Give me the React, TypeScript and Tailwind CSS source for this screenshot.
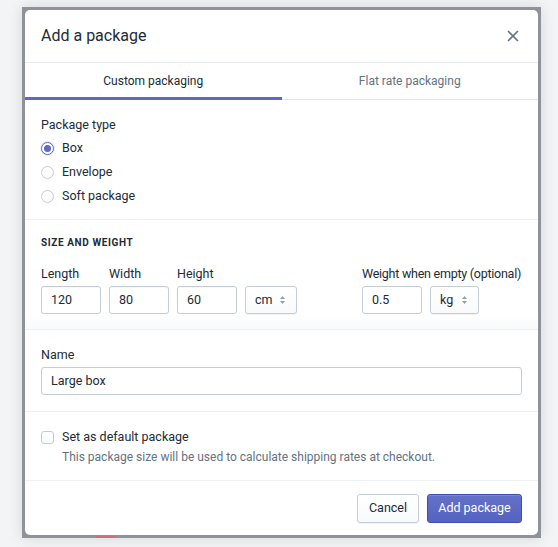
import React from "react";

function Arrows() {
  return (
    <svg width="7" height="10" viewBox="0 0 7 10" className="shrink-0">
      <path d="M3.5 1 L6 4 L1 4 Z" fill="#919eab" />
      <path d="M3.5 9 L6 6 L1 6 Z" fill="#919eab" />
    </svg>
  );
}

function Field({ label, value }: { label: string; value: string }) {
  return (
    <div className="flex flex-col">
      <div className="h-5 leading-5 text-[12.5px] text-[#212b36] mb-[2px]">{label}</div>
      <div className="w-[60px] h-[28px] border border-[#c4cdd5] rounded-[3px] bg-white flex items-center pl-[9px] text-[12.5px] text-[#212b36] shadow-[inset_0_1px_0_rgba(99,115,129,0.05)]">
        {value}
      </div>
    </div>
  );
}

function Select({ value, w }: { value: string; w: string }) {
  return (
    <div
      className={`${w} h-[28px] border border-[#c4cdd5] rounded-[3px] bg-gradient-to-b from-white to-[#f9fafb] flex items-center pl-[9px] pr-[10px] justify-between text-[12.5px] text-[#212b36] shadow-[0_1px_0_rgba(22,29,37,0.05)]`}
    >
      <span>{value}</span>
      <Arrows />
    </div>
  );
}

function Radio({ label, checked }: { label: string; checked?: boolean }) {
  return (
    <div className="h-6 flex items-center">
      <div
        className={
          checked
            ? "w-[13px] h-[13px] rounded-full border border-[#5c6ac4] bg-white flex items-center justify-center shadow-[0_0_0_1px_rgba(92,106,196,0.15)]"
            : "w-[13px] h-[13px] rounded-full border border-[#c4cdd5] bg-gradient-to-b from-white to-[#f9fafb]"
        }
      >
        {checked && <div className="w-[7px] h-[7px] rounded-full bg-[#5c6ac4]" />}
      </div>
      <span className="ml-[8px] text-[12.5px] text-[#212b36]">{label}</span>
    </div>
  );
}

export default function App() {
  return (
    <div className="w-[558px] h-[547px] bg-[#f3f4f5] pt-[7px] pl-[22px] font-['Roboto',sans-serif] overflow-hidden">
      <div className="relative w-[519px] h-[531px] bg-[#8f9399] p-[3px] shadow-[0_0_14px_rgba(0,0,0,0.12)]">
        <div className="absolute left-[74px] bottom-0 w-[20px] h-[2px] bg-[#c9707a]" />
        <div className="relative bg-white rounded-[5px] h-full flex flex-col overflow-hidden">
          <div className="h-[53px] shrink-0 flex items-center justify-between pl-4 pr-[19px] border-b border-[#e8ebee]">
            <span className="text-[16px] text-[#212b36]">Add a package</span>
            <svg width="12" height="12" viewBox="0 0 12 12">
              <path d="M1.5 1.5 L10.5 10.5 M10.5 1.5 L1.5 10.5" stroke="#637381" strokeWidth="1.7" strokeLinecap="round" />
            </svg>
          </div>
          <div className="h-[37px] shrink-0 flex border-b border-[#e3e7eb]">
            <div className="relative flex-1 flex items-center justify-center text-[12px] text-[#212b36]">
              Custom packaging
              <div className="absolute left-0 right-0 bottom-[-1px] h-[3px] bg-[#5c6ac4]" />
            </div>
            <div className="flex-1 flex items-center justify-center text-[12px] text-[#637381]">
              Flat rate packaging
            </div>
          </div>
          <div className="shrink-0 pl-4 pr-4 pt-[15px] pb-[11px] border-b border-[#eef0f2]">
            <div className="h-5 leading-5 text-[12.5px] text-[#212b36] mb-[1px]">Package type</div>
            <Radio label="Box" checked />
            <Radio label="Envelope" />
            <Radio label="Soft package" />
          </div>
          <div className="shrink-0 pl-4 pr-4 pt-[15px] pb-[15px] border-b border-[#eef0f2] bg-gradient-to-b from-white from-85% to-[#f9fafb]">
            <div className="h-4 leading-4 text-[10px] font-bold tracking-[0.6px] text-[#212b36]">SIZE AND WEIGHT</div>
            <div className="flex items-end mt-[13px]">
              <div className="flex items-end gap-2">
                <Field label="Length" value="120" />
                <Field label="Width" value="80" />
                <Field label="Height" value="60" />
                <Select value="cm" w="w-[52px]" />
              </div>
              <div className="ml-[65px] flex flex-col">
                <div className="h-5 leading-5 text-[12.5px] tracking-[-0.25px] text-[#212b36] mb-[2px] whitespace-nowrap">Weight when empty (optional)</div>
                <div className="flex gap-2">
                  <div className="w-[60px] h-[28px] border border-[#c4cdd5] rounded-[3px] bg-white flex items-center pl-[9px] text-[12.5px] text-[#212b36]">
                    0.5
                  </div>
                  <Select value="kg" w="w-[49px]" />
                </div>
              </div>
            </div>
          </div>
          <div className="shrink-0 pl-4 pr-4 pt-[15px] pb-[16px] border-b border-[#eef0f2]">
            <div className="h-5 leading-5 text-[12.5px] text-[#212b36] mb-[2px]">Name</div>
            <div className="h-[28px] border border-[#c4cdd5] rounded-[3px] bg-white flex items-center pl-[9px] text-[12.5px] text-[#212b36]">
              Large box
            </div>
          </div>
          <div className="shrink-0 pl-4 pr-4 pt-[15px] pb-[13px] border-b border-[#eef0f2]">
            <div className="h-5 flex items-center">
              <div className="w-[13px] h-[13px] rounded-[3px] border border-[#c4cdd5] bg-gradient-to-b from-white to-[#f9fafb]" />
              <span className="ml-[8px] text-[12.5px] text-[#212b36]">Set as default package</span>
            </div>
            <div className="h-5 leading-5 pl-[21px] text-[12px] text-[#637381]">
              This package size will be used to calculate shipping rates at checkout.
            </div>
          </div>
          <div className="flex-1 flex items-start justify-end gap-2 pr-4 pt-[13px]">
            <button className="h-[29px] w-[62px] border border-[#c4cdd5] rounded-[3px] bg-gradient-to-b from-white to-[#f9fafb] text-[12.5px] text-[#212b36] shadow-[0_1px_0_rgba(22,29,37,0.05)]">
              Cancel
            </button>
            <button className="h-[29px] w-[95px] border border-[#3f4eae] rounded-[3px] bg-gradient-to-b from-[#6371c7] to-[#5563c1] text-[12.5px] text-white shadow-[inset_0_1px_0_rgba(255,255,255,0.15)]">
              Add package
            </button>
          </div>
        </div>
      </div>
    </div>
  );
}
